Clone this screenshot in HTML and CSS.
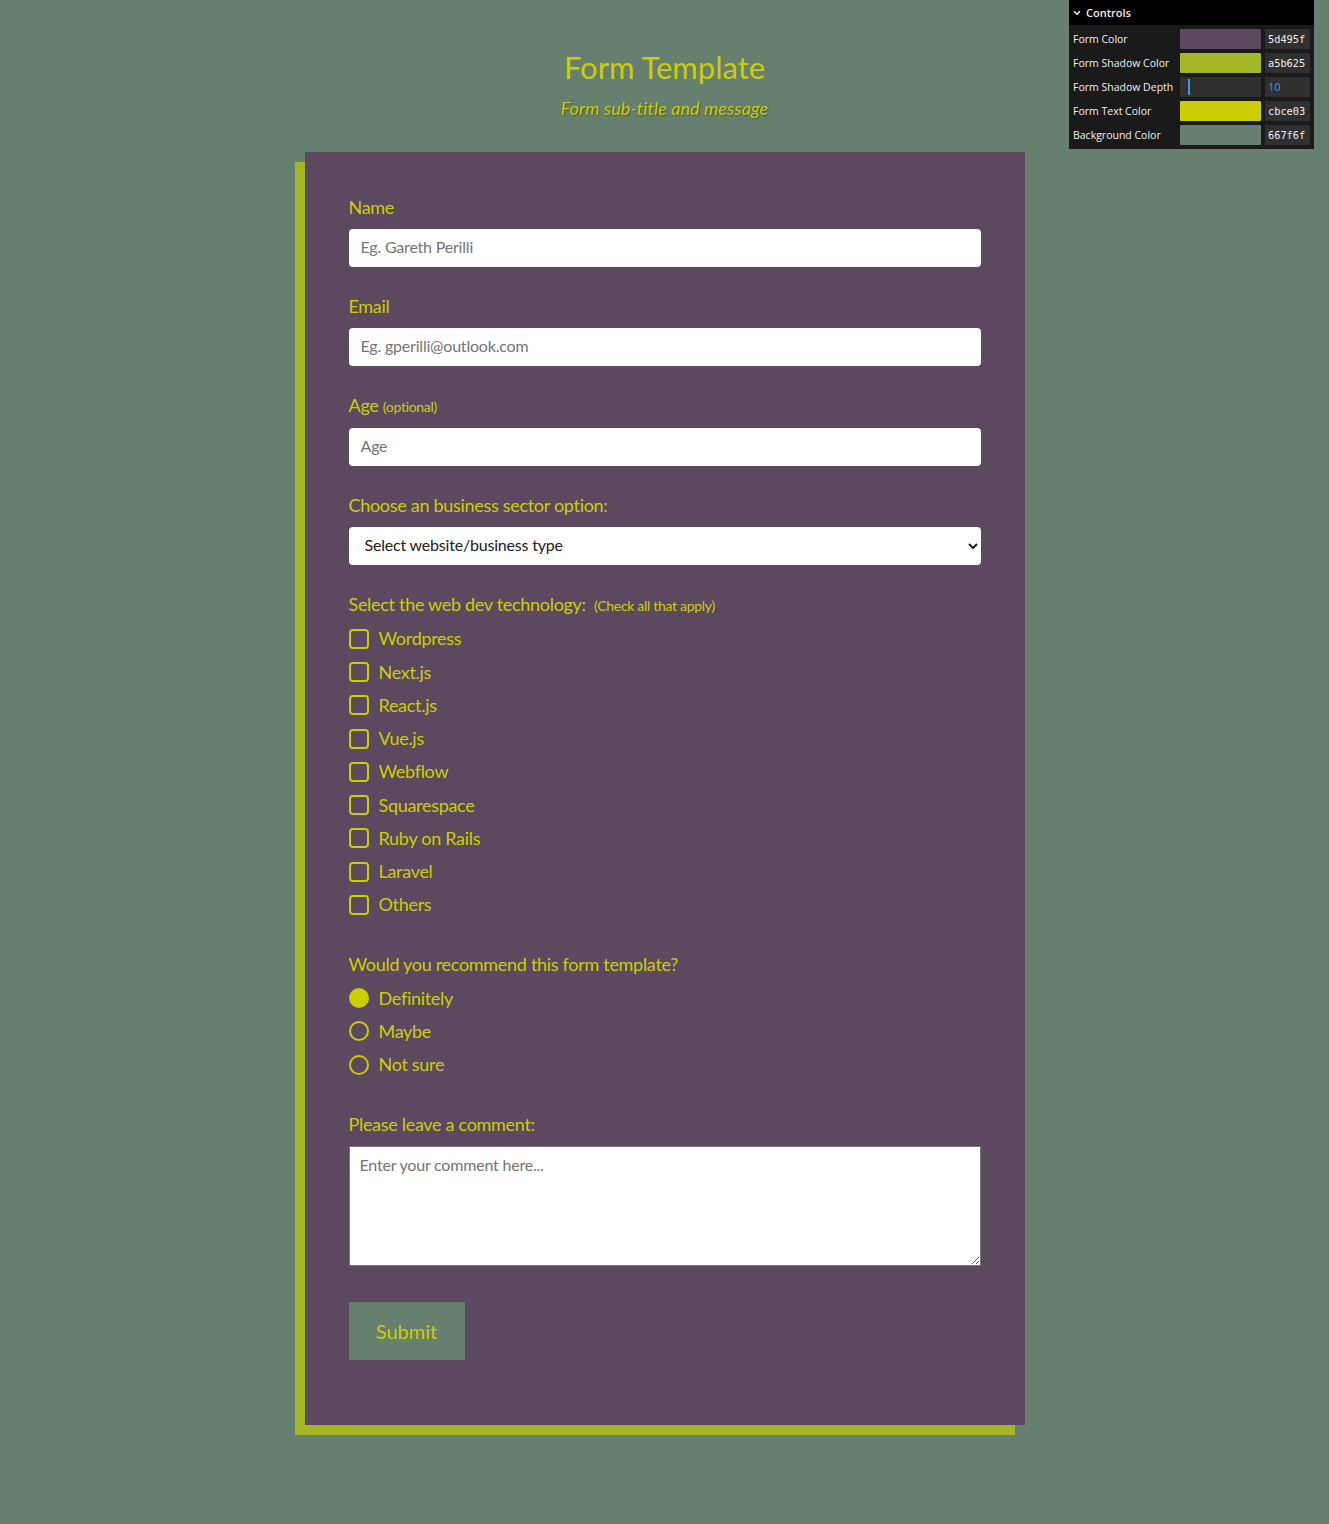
FILE: index.html
```html
<!DOCTYPE html>
<html lang="en">
<head>
<meta charset="utf-8">
<title>Form Template</title>
<link rel="stylesheet" href="styles.css">
</head>
<body>
<div class="gui">
  <div class="gui-title"><svg class="chev" width="8" height="6" viewBox="0 0 8 6"><path d="M1 1.2 L4 4.2 L7 1.2" fill="none" stroke="#eee" stroke-width="1.6"/></svg>Controls</div>
  <div class="gui-row"><span class="gui-label">Form Color</span><span class="swatch sw-form"></span><span class="gui-val">5d495f</span></div>
  <div class="gui-row"><span class="gui-label">Form Shadow Color</span><span class="swatch sw-shadow"></span><span class="gui-val">a5b625</span></div>
  <div class="gui-row"><span class="gui-label">Form Shadow Depth</span><span class="slider"><span class="slider-fg"></span></span><span class="gui-val num">10</span></div>
  <div class="gui-row"><span class="gui-label">Form Text Color</span><span class="swatch sw-text"></span><span class="gui-val">cbce03</span></div>
  <div class="gui-row"><span class="gui-label">Background Color</span><span class="swatch sw-bg"></span><span class="gui-val">667f6f</span></div>
</div>

<header class="head">
  <h1 class="title">Form Template</h1>
  <p class="subtitle">Form sub-title and message</p>
</header>

<form class="form">
  <div class="group">
    <label class="lbl" for="name">Name</label>
    <input class="field" id="name" type="text" placeholder="Eg. Gareth Perilli">
  </div>
  <div class="group">
    <label class="lbl" for="email">Email</label>
    <input class="field" id="email" type="email" placeholder="Eg. gperilli@outlook.com">
  </div>
  <div class="group">
    <label class="lbl" for="age">Age <small class="note">(optional)</small></label>
    <input class="field" id="age" type="text" placeholder="Age">
  </div>
  <div class="group">
    <label class="lbl" for="sector">Choose an business sector option:</label>
    <select class="field sel" id="sector">
      <option>Select website/business type</option>
    </select>
  </div>
  <div class="group group-list">
    <div class="lbl">Select the web dev technology: <small class="note note2">(Check all that apply)</small></div>
    <label class="opt"><input type="checkbox" class="cb">Wordpress</label>
    <label class="opt"><input type="checkbox" class="cb">Next.js</label>
    <label class="opt"><input type="checkbox" class="cb">React.js</label>
    <label class="opt"><input type="checkbox" class="cb">Vue.js</label>
    <label class="opt"><input type="checkbox" class="cb">Webflow</label>
    <label class="opt"><input type="checkbox" class="cb">Squarespace</label>
    <label class="opt"><input type="checkbox" class="cb">Ruby on Rails</label>
    <label class="opt"><input type="checkbox" class="cb">Laravel</label>
    <label class="opt"><input type="checkbox" class="cb">Others</label>
  </div>
  <div class="group group-list">
    <div class="lbl">Would you recommend this form template?</div>
    <label class="opt"><input type="radio" name="rec" class="rb" checked>Definitely</label>
    <label class="opt"><input type="radio" name="rec" class="rb">Maybe</label>
    <label class="opt"><input type="radio" name="rec" class="rb">Not sure</label>
  </div>
  <div class="group group-comment">
    <label class="lbl" for="comment">Please leave a comment:</label>
    <textarea class="area" id="comment" placeholder="Enter your comment here..."></textarea>
  </div>
  <button class="submit" type="button">Submit</button>
</form>
</body>
</html>
```

FILE: styles.css
```css
html, body {
  margin: 0;
  padding: 0;
}
body {
  background: #667f6f;
  font-family: "Lato", "Open Sans", sans-serif;
  color: #cbce03;
  min-height: 1524px;
  position: relative;
}

/* controls panel */
.gui {
  position: absolute;
  top: 0;
  right: 15px;
  width: 245px;
  background: #1a1a1a;
  font-family: "Open Sans", "DejaVu Sans", sans-serif;
  font-size: 10.5px;
  color: #eee;
  padding-bottom: 2px;
}
.gui-title {
  height: 25px;
  line-height: 24px;
  background: #000;
  padding-left: 4px;
  font-weight: 600;
  font-size: 11px;
  display: flex;
  align-items: center;
  gap: 5px;
  margin-bottom: 2px;
}
.chev { display: block; }
.gui-row {
  height: 24px;
  display: flex;
  align-items: center;
  padding-left: 4px;
  background: #1a1a1a;
}
.gui-label {
  width: 107px;
  white-space: nowrap;
  overflow: hidden;
}
.swatch, .slider {
  width: 81px;
  height: 20px;
  border-radius: 1px;
}
.sw-form { background: #5d495f; }
.sw-shadow { background: #a5b625; }
.sw-text { background: #cbce03; }
.sw-bg { background: #667f6f; }
.slider {
  background: #303030;
  position: relative;
}
.slider-fg {
  position: absolute;
  left: 8px;
  top: 2px;
  width: 2px;
  height: 16px;
  background: #2fa1d6;
}
.gui-val {
  margin-left: 4px;
  width: 45px;
  height: 20px;
  line-height: 20px;
  background: #303030;
  font-family: "DejaVu Sans Mono", "Liberation Mono", monospace;
  font-size: 10.3px;
  padding-left: 3px;
  box-sizing: border-box;
  color: #eee;
}
.gui-val.num {
  color: #2fa1d6;
  font-family: "Open Sans", sans-serif;
  font-size: 11px;
}

/* heading */
.head {
  text-align: center;
  padding-top: 47px;
}
.title {
  margin: 0;
  font-size: 31px;
  font-weight: 400;
  line-height: 40px;
}
.subtitle {
  margin: 9px 0 0;
  font-size: 18px;
  font-style: italic;
  line-height: 24px;
  letter-spacing: 0.1px;
  text-shadow: 1px 1px 1px rgba(0,0,0,0.35);
}

/* form */
.form {
  width: 720px;
  box-sizing: border-box;
  margin: 32px auto 0;
  background: #5d495f;
  box-shadow: -10px 10px 0 #a5b625;
  padding: 42px 44px 65px;
  letter-spacing: -0.3px;
}
.group {
  margin-bottom: 26px;
}
.group-list {
  margin-bottom: 33px;
}
.group-comment {
  margin-bottom: 36px;
}
.lbl {
  display: block;
  font-size: 18px;
  line-height: 27px;
  margin-bottom: 8px;
}
.group-list .lbl {
  margin-bottom: 0;
}
.note {
  font-size: 14px;
}
.note2 {
  margin-left: 4px;
}
.field {
  display: block;
  width: 100%;
  height: 38px;
  box-sizing: border-box;
  border: none;
  border-radius: 4px;
  background: #fff;
  padding: 0 12px 3px;
  font-family: inherit;
  font-size: 16px;
  letter-spacing: -0.2px;
  color: #333;
}
.field::placeholder { color: #757575; }
.sel {
  padding-left: 12px;
  color: #222;
}
.opt {
  display: flex;
  align-items: center;
  gap: 10px;
  font-size: 18px;
  line-height: 27px;
  margin-top: 6.25px;
}
.cb, .rb {
  appearance: none;
  -webkit-appearance: none;
  margin: 0;
  width: 20px;
  height: 20px;
  box-sizing: border-box;
  border: 2px solid #cbce03;
  background: transparent;
  flex: none;
}
.cb { border-radius: 4px; }
.rb { border-radius: 50%; }
.rb:checked { background: #cbce03; }
.area {
  display: block;
  width: 100%;
  height: 120px;
  box-sizing: border-box;
  border: 1px solid #767676;
  background: #fff;
  padding: 8px 10px;
  font-family: inherit;
  font-size: 16px;
  letter-spacing: -0.2px;
  margin: 0;
}
.area::placeholder { color: #757575; }
.submit {
  display: block;
  width: 116px;
  height: 58px;
  border: none;
  background: #667f6f;
  color: #cbce03;
  font-family: inherit;
  font-size: 20px;
  padding: 0;
}
```
